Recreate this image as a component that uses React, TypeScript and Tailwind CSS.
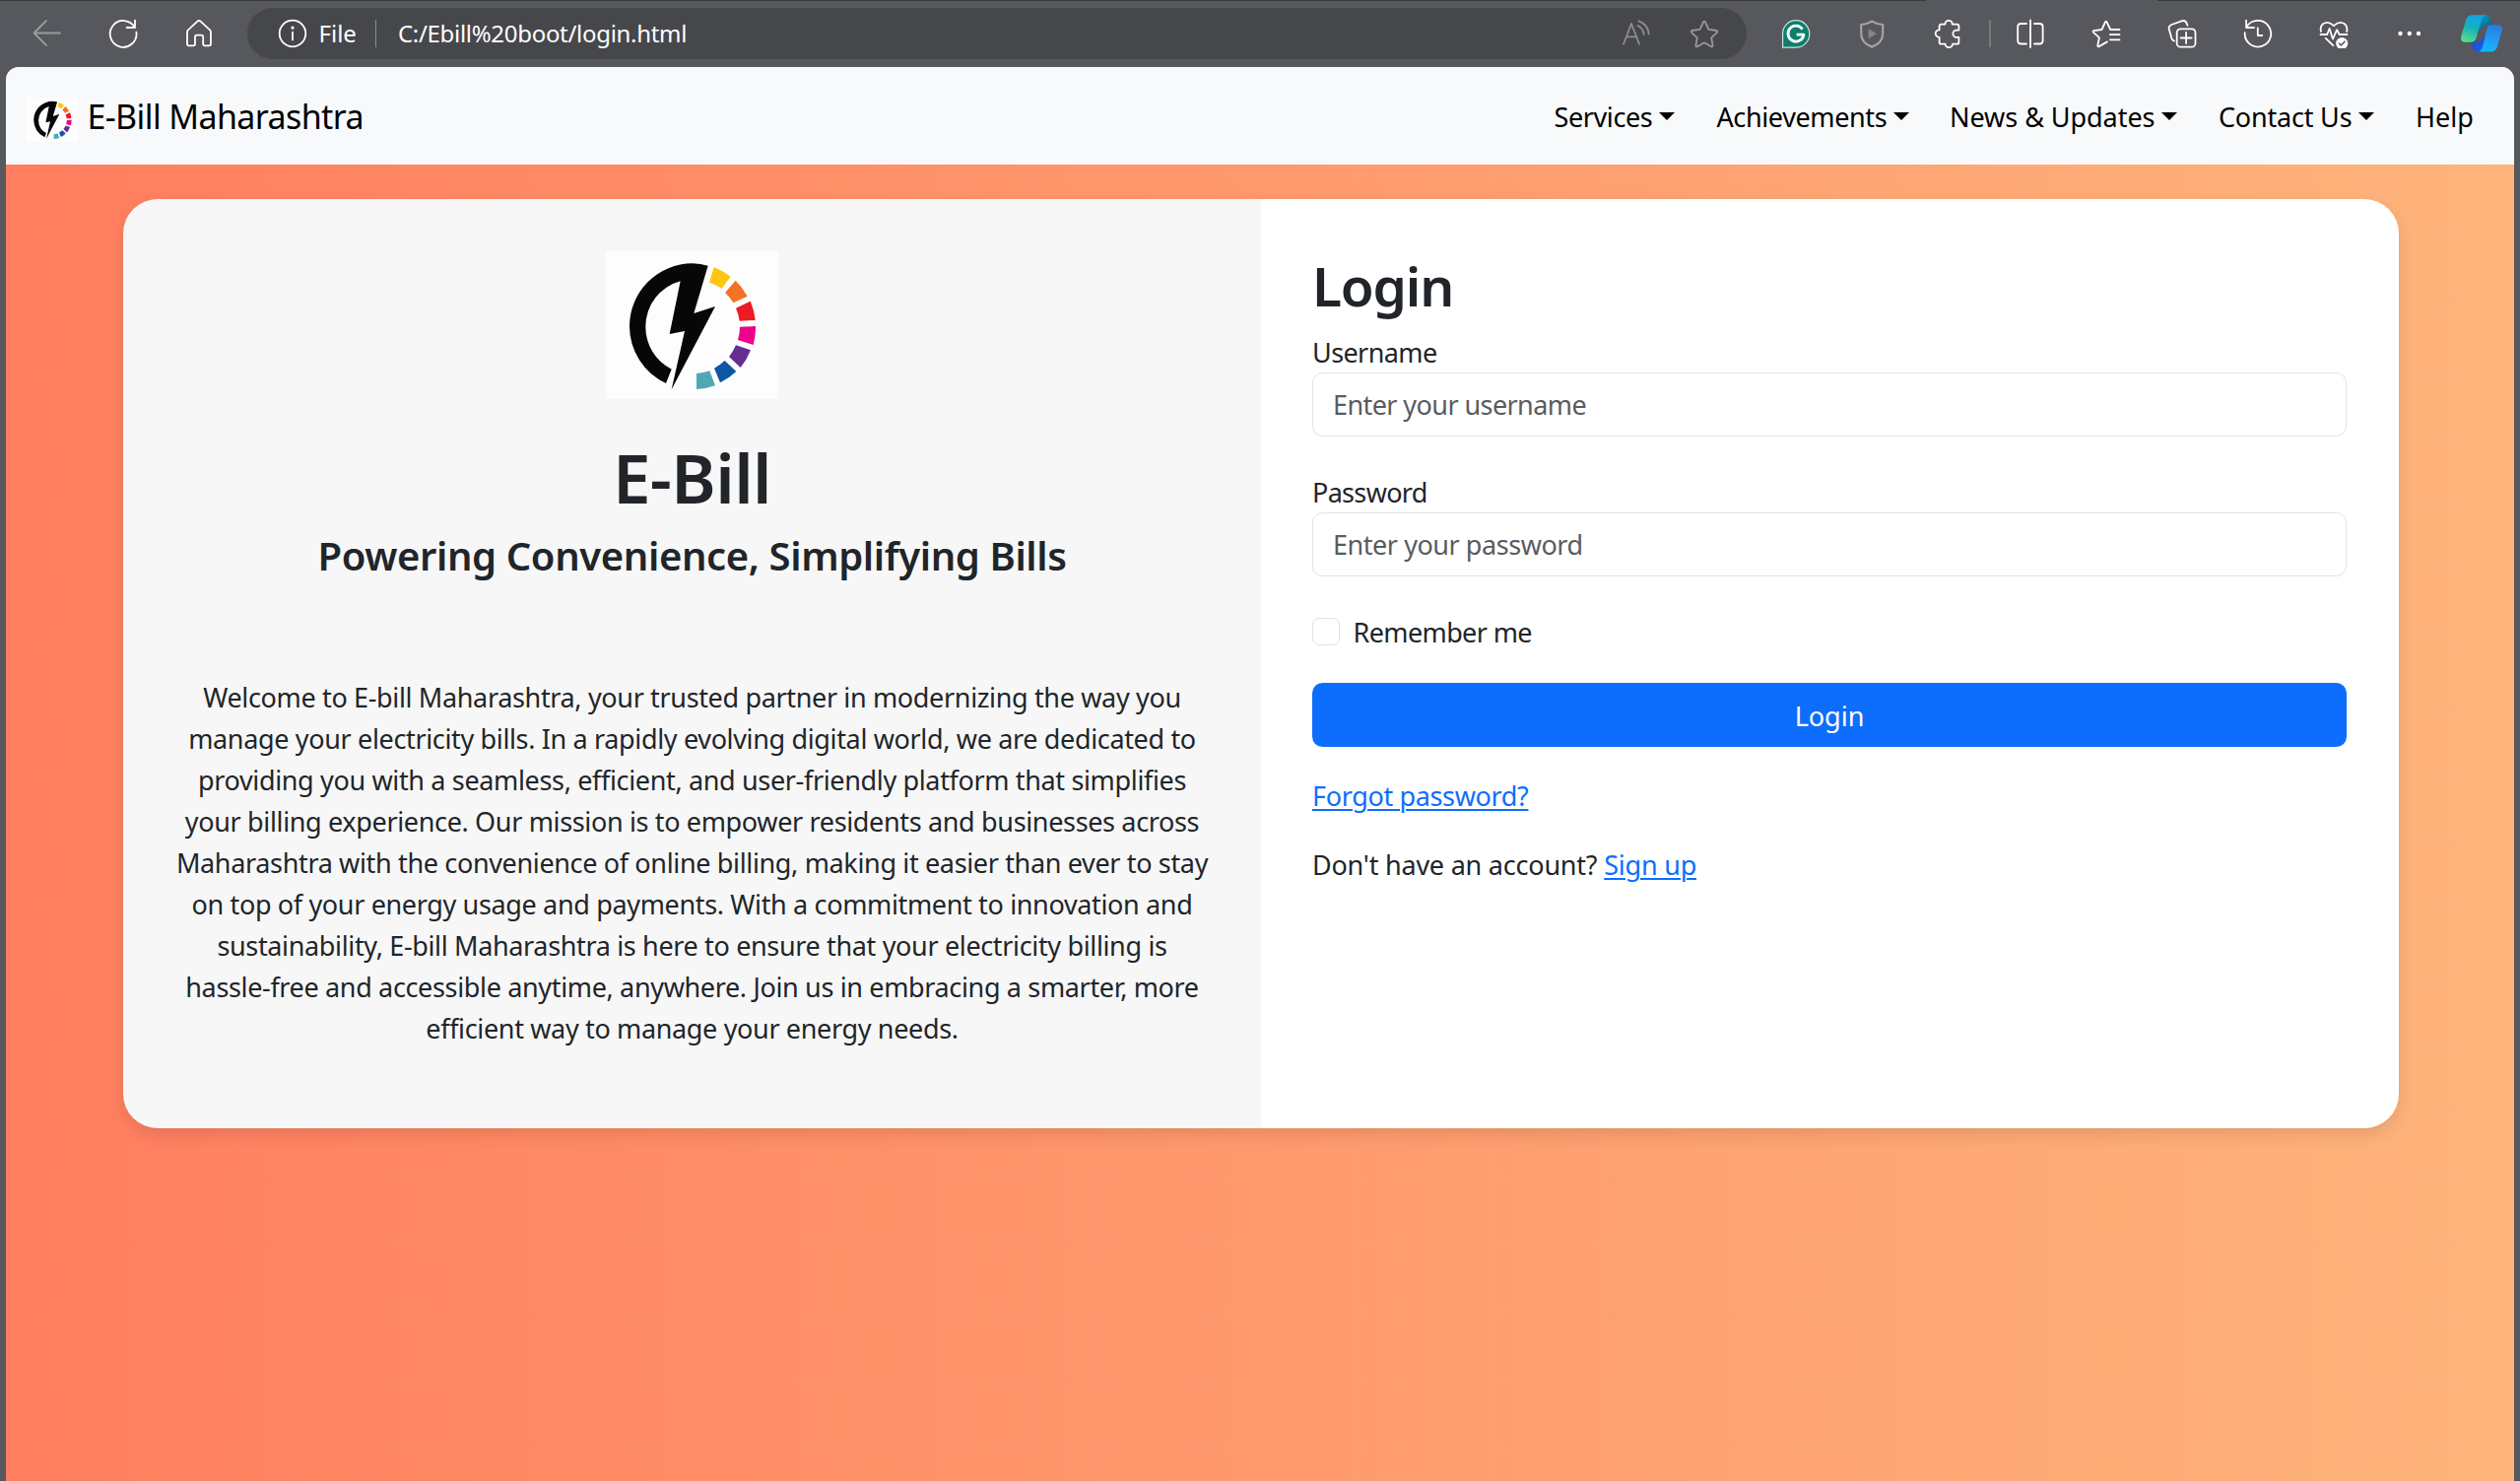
import type { ReactNode } from "react";

function Icon({ children, className = "text-white" }: { children: ReactNode; className?: string }) {
  return (
    <svg
      viewBox="0 0 30 30"
      className={`size-[30px] shrink-0 ${className}`}
      fill="none"
      stroke="currentColor"
      strokeWidth="1.8"
      strokeLinecap="round"
      strokeLinejoin="round"
    >
      {children}
    </svg>
  );
}

function BrandMark({ className }: { className: string }) {
  return (
    <svg viewBox="105 75 525 450" className={className}>
      <rect x="105" y="75" width="525" height="450" fill="#fdfdfd" />
      <path
        fill="#050708"
        d="M416 119 L373 264 L438 243 L305 496 L345 318 L299 327 L332 166 A143 143 0 0 0 226 304 A143 143 0 0 0 305 434 L288 477 A192 192 0 0 1 177 304 A192 192 0 0 1 369 112 Q393 113 416 119 Z"
      />
      <path fill="#fdc612" d="M434 124 A192 192 0 0 1 485 152 L458 188 A143 143 0 0 0 420 170 Z" />
      <path fill="#f37324" d="M500 164 A192 192 0 0 1 536 212 L493 232 A143 143 0 0 0 468 201 Z" />
      <path fill="#ed1b24" d="M545 227 A192 192 0 0 1 560 285 L512 287 A143 143 0 0 0 501 248 Z" />
      <path fill="#ec008c" d="M561 303 A192 192 0 0 1 554 360 L507 345 A143 143 0 0 0 513 305 Z" />
      <path fill="#662d91" d="M546 376 A192 192 0 0 1 515 429 L480 396 A143 143 0 0 0 501 361 Z" />
      <path fill="#0d56a6" d="M502 441 A192 192 0 0 1 453 475 L435 431 A143 143 0 0 0 467 408 Z" />
      <path fill="#4fa9b5" d="M438 484 A192 192 0 0 1 381 495 L381 447 A143 143 0 0 0 421 439 Z" />
    </svg>
  );
}

function CopilotIcon() {
  return (
    <svg viewBox="0 0 42 38" className="ml-[37px] h-[38px] w-[42px] shrink-0">
      <defs>
        <linearGradient id="cpLeft" x1="0.6" y1="0" x2="0.3" y2="1">
          <stop offset="0" stopColor="#0fa4e6" />
          <stop offset="0.5" stopColor="#14b4b8" />
          <stop offset="1" stopColor="#5bdc8a" />
        </linearGradient>
        <linearGradient id="cpRight" x1="0.6" y1="0" x2="0.4" y2="1">
          <stop offset="0" stopColor="#2a7be0" />
          <stop offset="1" stopColor="#15b8ff" />
        </linearGradient>
        <linearGradient id="cpTop" x1="0" y1="0" x2="1" y2="1">
          <stop offset="0" stopColor="#0a9fd0" />
          <stop offset="1" stopColor="#0b5b80" />
        </linearGradient>
        <linearGradient id="cpBottom" x1="0" y1="0" x2="1" y2="1">
          <stop offset="0" stopColor="#1a49c9" />
          <stop offset="1" stopColor="#1c5df0" />
        </linearGradient>
      </defs>
      <path fill="url(#cpTop)" d="M17 0.3 H25 C28.5 0.3 29.8 2.6 30.8 6 L32 10 H27 C23.5 10 22 12 21 15 L16 15 Z" />
      <path fill="url(#cpBottom)" d="M8 27.8 H17 C20 27.8 21.6 25 22.5 22 L27 24 L20 37.5 H17.5 C14 37.5 12.6 35.5 11.8 32.5 C11 29.5 10.4 27.8 8 27.8 Z" />
      <path fill="url(#cpLeft)" d="M11.5 0.3 H26 C22.5 0.9 21.2 4 20.2 7.5 L15.8 23 C14.8 26.2 13 27.8 10 27.8 H4 C0.8 27.8 -0.6 25.2 0.4 21.5 L5 5.6 C6 2 8.2 0.3 11.5 0.3 Z" />
      <path fill="url(#cpRight)" d="M31 10.2 H38 C41.4 10.2 42.6 12.8 41.6 16.5 L37 32.2 C36 35.8 33.8 37.6 30.5 37.6 H17 C20.4 37.2 21.6 34 22.6 30.4 L26.2 15 C27 12 28.4 10.2 31 10.2 Z" />
    </svg>
  );
}

function Toolbar() {
  return (
    <header className="flex h-[68px] shrink-0 flex-col">
      <div className="flex h-px justify-between">
        <div className="w-[1955px] bg-[#38393d]" />
        <div className="w-[368px] bg-[#38393d]" />
      </div>
      <div className="-mt-px flex h-[68px] items-center pl-[33px]">
        <div className="flex items-center gap-[47px]">
          <Icon className="text-[#999a9d]">
            <path d="M28 14.5H1.5M14 2 1.5 14.5 14 27" />
          </Icon>
          <Icon>
            <path d="M28.4 13.6A13.4 13.4 0 1 1 26.9 9M27 1.6V9h-8.4" />
          </Icon>
          <Icon>
            <path d="M3 13.5Q3 12.3 4 11.4L13.4 2.6Q15 1.3 16.6 2.6L26 11.4Q27 12.3 27 13.5V25.5Q27 27.3 25.2 27.3H21Q19.2 27.3 19.2 25.5V18.5Q19.2 16.7 17.4 16.7H12.8Q11 16.7 11 18.5V25.5Q11 27.3 9.2 27.3H4.8Q3 27.3 3 25.5Z" />
          </Icon>
        </div>

        <div className="ml-[34px] flex h-[52px] w-[1522px] shrink-0 items-center rounded-full bg-[#46474b] pr-7 pl-[30.5px] text-[24px] whitespace-nowrap text-white">
          <Icon>
            <circle cx="15" cy="15" r="13.3" />
            <path d="M15 13.6V21.4" />
            <circle cx="15" cy="9.2" r="0.7" fill="currentColor" />
          </Icon>
          <span className="ml-[12px]">File</span>
          <span className="ml-[19px] h-7 w-px bg-[#8b8c8f]" />
          <span className="ml-[22px] flex-1 tracking-[-0.3px]">C:/Ebill%20boot/login.html</span>
          <div className="flex gap-[39px]">
            <Icon className="text-[#8d8e91]">
              <path d="M2 25.7 10 5 18 25.7M5 18.3H15.2M17.5 2.3Q27 6 27.7 15.5M16.5 7Q22 9.8 22.7 16" />
            </Icon>
            <Icon className="text-[#97989b]">
              <path d="M14 3.3Q15 1.8 16 3.3L19.4 10.8 27.4 12Q29 12.5 27.9 13.8L22.2 19.3 23.6 27.2Q23.5 28.8 22 28.2L15 24.3 8 28.2Q6.5 28.8 6.4 27.2L7.8 19.3 2.1 13.8Q1 12.5 2.6 12L10.6 10.8Z" />
            </Icon>
          </div>
        </div>

        <div className="ml-[35px] flex items-center gap-[47px]">
          <Icon className="text-white">
            <path fill="#0b7f6c" stroke="#cfe3df" strokeWidth="1.2" d="M15 1.7A13.5 13.5 0 1 1 15 29.2H1.6V15A13.4 13.4 0 0 1 15 1.7Z" />
            <path strokeWidth="2.8" strokeLinecap="butt" d="M21.6 10.6A8 8 0 1 0 22.9 16.2H15.6" />
          </Icon>
          <Icon className="text-[#a3a3a4]">
            <path strokeWidth="2.2" d="M15.2 2.6Q20 5.6 26.2 6V15Q26.2 24.5 15.2 28.6 4.2 24.5 4.2 15V6Q10.4 5.6 15.2 2.6Z" />
            <path fill="#858689" stroke="none" d="M11.7 10.3 20 15.3 11.7 20.3Z" />
          </Icon>
          <Icon>
            <path d="M8.6 5.7H12.4A3.7 3.9 0 0 1 19.8 5.7H24.4Q26.4 5.7 26.4 7.7V11.6H24A3.6 3.6 0 0 0 24 18.8H26.4V23.7Q26.4 25.7 24.4 25.7H20A3.7 3.4 0 0 1 12.6 25.7H8.6Q6.6 25.7 6.6 23.7V18.8A3.9 3.7 0 0 1 6.6 11.4V7.7Q6.6 5.7 8.6 5.7Z" />
          </Icon>
        </div>
        <span className="ml-[27px] h-7 w-[2px] shrink-0 bg-[#77787c]" />
        <div className="ml-[25px] flex items-center gap-[47px]">
          <Icon>
            <path d="M15 1.5V29M11 5H5.5Q2.2 5 2.2 8.3V22.2Q2.2 25.5 5.5 25.5H11M19 5H24.3Q27.6 5 27.6 8.3V22.2Q27.6 25.5 24.3 25.5H19" />
          </Icon>
          <Icon>
            <path d="M16 23.4 7.8 28.1Q6 28.7 6.3 27L7.9 19.2 2 13.8Q1 12.5 2.5 12.1L10.5 11 14 3.4Q14.8 1.9 15.6 3.4L19.2 11H28.5M19 16.2H28.5M19 21.4H28.5" />
          </Icon>
          <Icon>
            <rect x="9.7" y="10.3" width="18.8" height="18.4" rx="3.8" />
            <path d="M19.1 14V25M13.6 19.5H24.6M7 22.6Q5 22.2 4.4 20L1.8 10.8Q1 7.2 4.4 6L14.5 2.3Q18.3 1.2 19.7 4.7L20.4 6.8" />
          </Icon>
          <Icon>
            <path d="M1.7 14.2A13.3 13.3 0 1 0 3.4 8.6M3.1 1.6V9H11M14.8 9.3V17H19.3" />
          </Icon>
          <Icon>
            <path d="M2 13Q0.7 8 4 5.3 9.5 1.6 15 7.2 20.5 1.6 26 5.3 29.3 8 28.2 13M1.5 16H8.2L10.6 10 14 20.6 18.2 11.2 20.6 16H28.5M6.8 19.8 14.3 27.2" />
            <circle cx="23.2" cy="25" r="5.2" fill="white" stroke="white" />
            <path stroke="#57585d" strokeWidth="1.6" d="M20.5 25.2 22.4 27 26 23.2" />
          </Icon>
          <Icon>
            <g fill="currentColor" stroke="none">
              <circle cx="5.5" cy="15" r="2.2" />
              <circle cx="14.8" cy="15" r="2.2" />
              <circle cx="24" cy="15" r="2.2" />
            </g>
          </Icon>
        </div>
        <CopilotIcon />
      </div>
    </header>
  );
}

function Caret() {
  return (
    <svg viewBox="0 0 16 8" className="mb-0.5 ml-[7px] h-2 w-4 shrink-0">
      <path d="M0 0H16L8 8Z" />
    </svg>
  );
}

function Navbar() {
  return (
    <nav className="flex h-[99px] shrink-0 items-center justify-between bg-[#f8f9fa] text-black">
      <a className="flex items-center pl-[21px]">
        <BrandMark className="mt-2 h-[45px] w-[52.5px]" />
        <span className="ml-[9px] text-[34px] leading-none tracking-[-0.62px]">E-Bill Maharashtra</span>
      </a>
      <ul className="flex pt-0.5 text-[27px] leading-[42px] whitespace-nowrap">
        <li className="flex w-[165px] items-center tracking-[-0.4px]">Services<Caret /></li>
        <li className="flex w-[236.5px] items-center tracking-[-0.38px]">Achievements<Caret /></li>
        <li className="flex w-[273px] items-center tracking-[-0.05px]">News &amp; Updates<Caret /></li>
        <li className="flex w-[200px] items-center tracking-[-0.2px]">Contact Us<Caret /></li>
        <li className="w-[100px]">Help</li>
      </ul>
    </nav>
  );
}

const aboutLines = [
  "Welcome to E-bill Maharashtra, your trusted partner in modernizing the way you",
  "manage your electricity bills. In a rapidly evolving digital world, we are dedicated to",
  "providing you with a seamless, efficient, and user-friendly platform that simplifies",
  "your billing experience. Our mission is to empower residents and businesses across",
  "Maharashtra with the convenience of online billing, making it easier than ever to stay",
  "on top of your energy usage and payments. With a commitment to innovation and",
  "sustainability, E-bill Maharashtra is here to ensure that your electricity billing is",
  "hassle-free and accessible anytime, anywhere. Join us in embracing a smarter, more",
  "efficient way to manage your energy needs.",
];

function About() {
  return (
    <section className="flex w-[1155px] flex-col items-center bg-[#f7f7f7] pt-[53px] text-center whitespace-nowrap">
      <BrandMark className="h-[150px] w-[175px]" />
      <h1 className="mt-[37px] text-[69px] leading-[84px] font-semibold tracking-[-0.6px]">E-Bill</h1>
      <h3 className="mt-[13px] text-[40px] leading-[50px] font-semibold tracking-[-0.38px]">
        Powering Convenience, Simplifying Bills
      </h3>
      <p className="mt-[98px] text-[27px] leading-[42px] tracking-[-0.35px]">
        {aboutLines.map((line) => (
          <span key={line} className="block">{line}</span>
        ))}
      </p>
    </section>
  );
}

function LoginForm() {
  return (
    <section className="flex flex-1 flex-col bg-white pt-[54px] pr-[53px] pl-[52px] text-[27px] leading-[42px]">
      <h2 className="text-[55px] leading-[67px] font-semibold tracking-[-1.2px]">Login</h2>
      <label className="mt-[13px] h-[42px] leading-[44px] tracking-[-0.6px]">Username</label>
      <input
        className="h-[65px] rounded-[10.5px] border border-[#dee2e6] px-5 tracking-[-0.58px] placeholder:text-[#595c5f]"
        placeholder="Enter your username"
      />
      <label className="mt-[35px] h-[42px] leading-[44px] tracking-[-0.68px]">Password</label>
      <input
        type="password"
        className="h-[65px] rounded-[10.5px] border border-[#dee2e6] px-5 tracking-[-0.45px] placeholder:text-[#595c5f]"
        placeholder="Enter your password"
      />
      <label className="mt-[35px] flex h-[42px] items-center tracking-[-0.62px]">
        <input type="checkbox" className="mr-[13.5px] size-7 appearance-none rounded-[7px] border border-[#dee2e6] bg-white" />
        <span className="pt-0.5">Remember me</span>
      </label>
      <button className="mt-[31px] h-[65px] rounded-[10.5px] bg-[#0d6efd] pt-0.5 text-white">Login</button>
      <a className="mt-7 h-[42px] self-start leading-[44px] tracking-[-0.35px] text-[#0d6efd] underline decoration-2 underline-offset-[3px]">
        Forgot password?
      </a>
      <p className="mt-7 h-[42px] leading-[44px] tracking-[-0.22px]">
        Don't have an account?{" "}
        <a className="text-[#0d6efd] underline decoration-2 underline-offset-[3px]">Sign up</a>
      </p>
    </section>
  );
}

export default function App() {
  return (
    <div className="flex h-[1503px] w-[2558px] flex-col overflow-hidden bg-[#57585d] font-['Noto_Sans','Open_Sans',sans-serif] text-[#212529]">
      <Toolbar />
      <div className="mx-1.5 flex flex-1 flex-col overflow-hidden rounded-t-[13px] bg-linear-to-r/srgb from-[#ff7e5f] to-[#feb47b]">
        <Navbar />
        <main className="mt-[35px] ml-[119px] flex h-[943px] w-[2310px] shrink-0">
          <div className="flex w-full overflow-hidden rounded-[35px] shadow-[0_7px_17px_rgba(0,0,0,0.1)]">
            <About />
            <LoginForm />
          </div>
        </main>
      </div>
    </div>
  );
}
